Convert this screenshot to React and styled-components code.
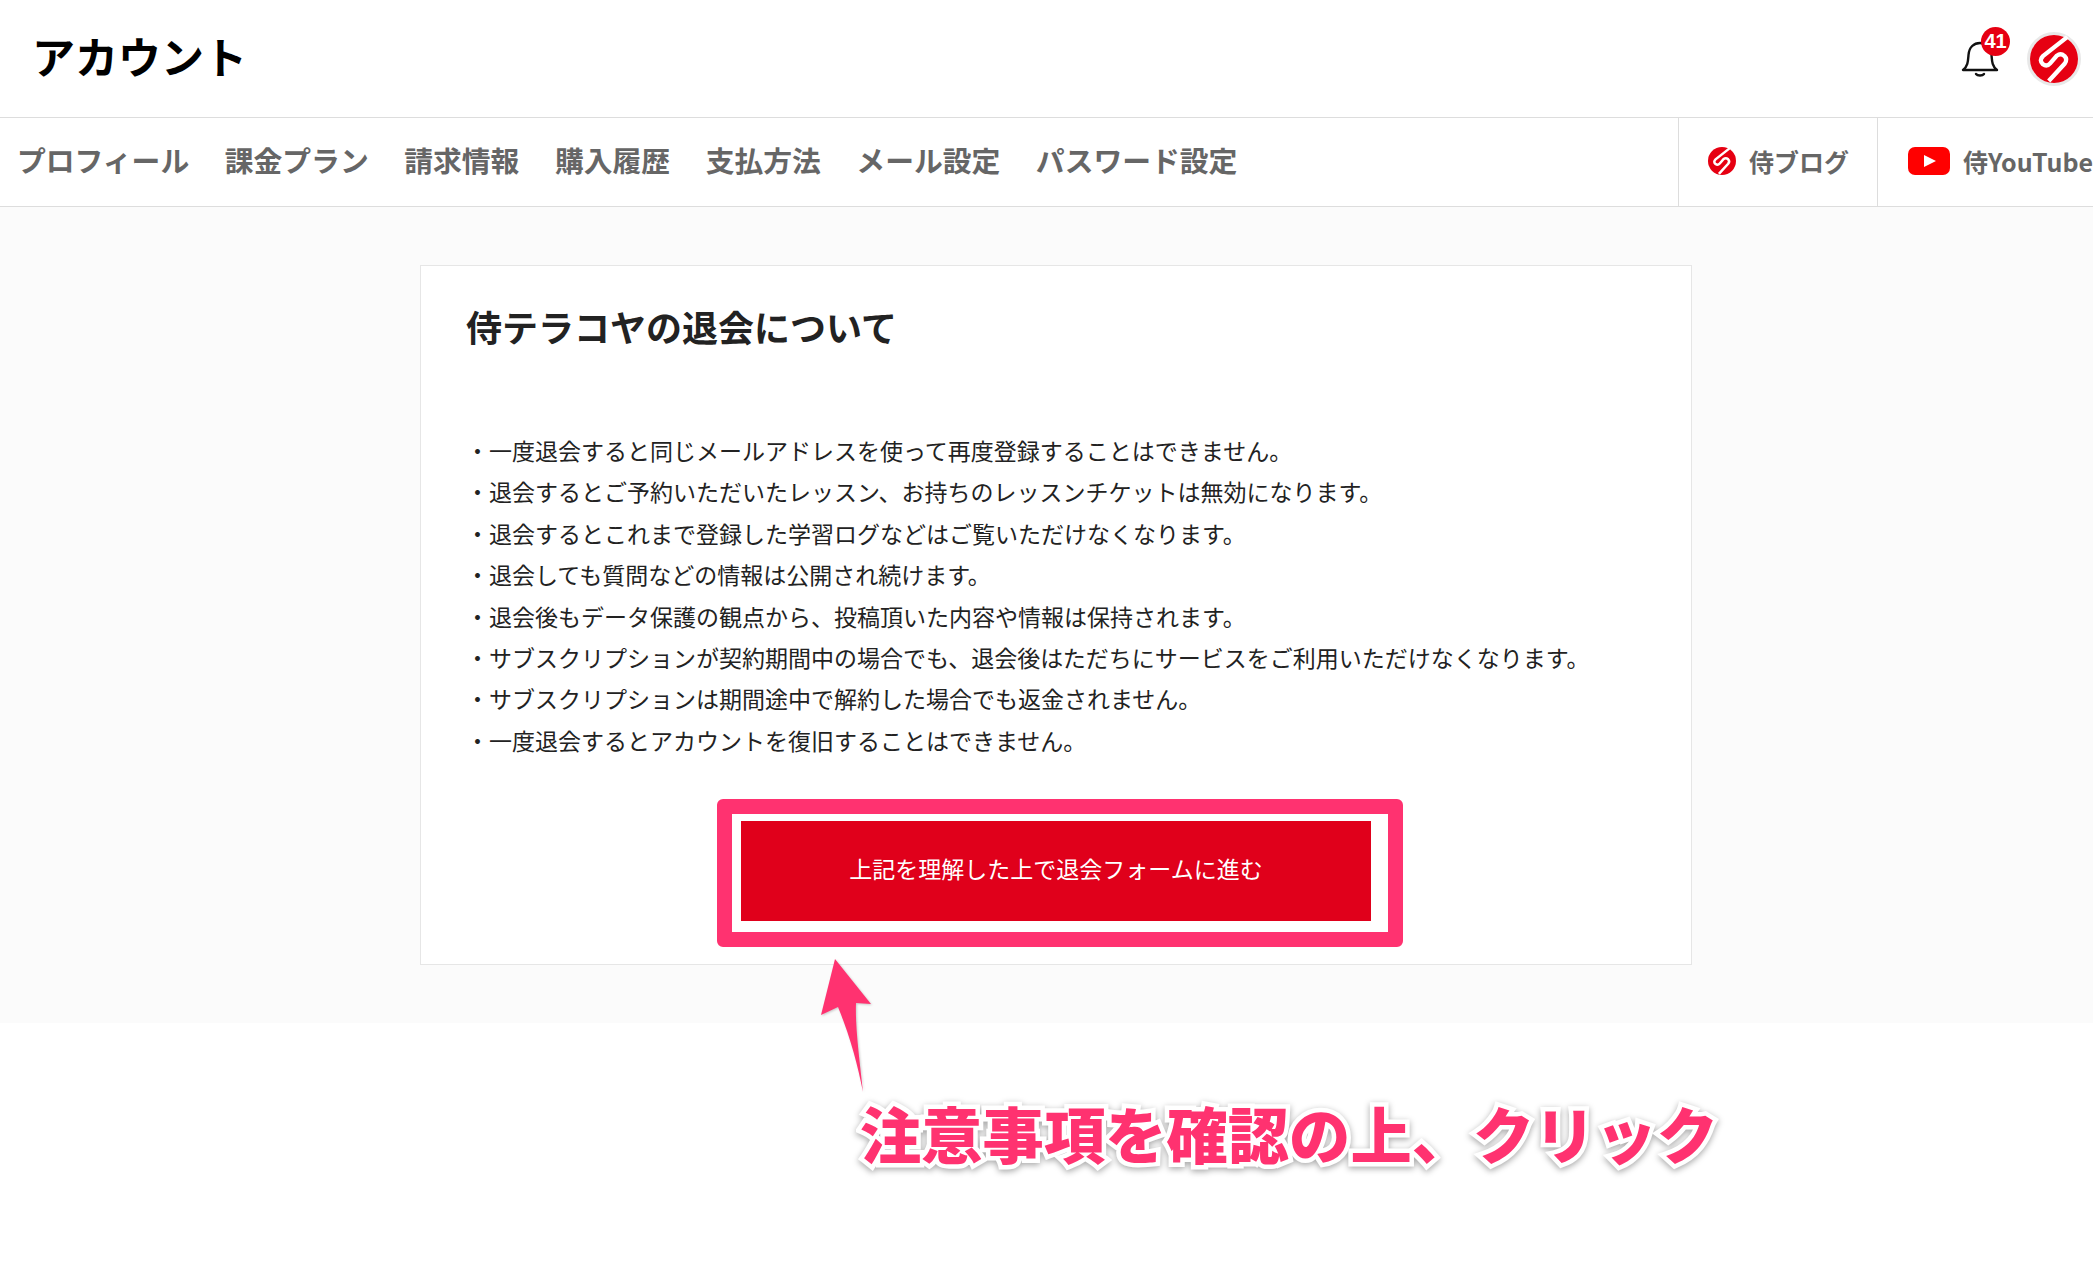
import styled, { createGlobalStyle } from 'styled-components';

const GlobalStyle = createGlobalStyle`
  html, body {
    margin: 0;
    background: #fff;
    font-family: "Noto Sans CJK JP", "Liberation Sans", sans-serif;
  }
`;

const NOTES = [
  '・一度退会すると同じメールアドレスを使って再度登録することはできません。',
  '・退会するとご予約いただいたレッスン、お持ちのレッスンチケットは無効になります。',
  '・退会するとこれまで登録した学習ログなどはご覧いただけなくなります。',
  '・退会しても質問などの情報は公開され続けます。',
  '・退会後もデータ保護の観点から、投稿頂いた内容や情報は保持されます。',
  '・サブスクリプションが契約期間中の場合でも、退会後はただちにサービスをご利用いただけなくなります。',
  '・サブスクリプションは期間途中で解約した場合でも返金されません。',
  '・一度退会するとアカウントを復旧することはできません。',
];

const TABS = ['プロフィール', '課金プラン', '請求情報', '購入履歴', '支払方法', 'メール設定', 'パスワード設定'];

const SamuraiMark = ({ size }) => (
  <svg width={size} height={size} viewBox="0 0 100 100">
    <circle cx="50" cy="50" r="50" fill="#e60012" />
    <path
      d="M78 4 L27 44 Q18 53 27 61 Q35 67 42 59 L56 43 Q64 37 72 44 Q79 51 72 60 L39 96"
      fill="none"
      stroke="#fff"
      strokeWidth="9"
    />
  </svg>
);

const App = () => {
  return (
    <Page>
      <GlobalStyle />
      <Header>
        <PageTitle>アカウント</PageTitle>
        <HeaderIcons>
          <BellWrap>
            <svg width="38" height="38" viewBox="0 0 38 38" fill="none" stroke="#111" strokeWidth="2.4">
              <path d="M2 31 H36 C31 27 31 22 30.500 16 C30 8 25 4 19 4 C13 4 8 8 7.500 16 C7 22 7 27 2 31 Z" strokeLinejoin="round" />
              <path d="M15 35 C16.500 37 21.500 37 23 35" strokeLinecap="round" />
            </svg>
            <Badge>41</Badge>
          </BellWrap>
          <Avatar>
            <SamuraiMark size={48} />
          </Avatar>
        </HeaderIcons>
      </Header>
      <NavBar>
        <Tabs>
          {TABS.map((t) => (
            <Tab key={t}>{t}</Tab>
          ))}
        </Tabs>
        <SideLinks>
          <SideLink $width={199} $pad={29}>
            <SamuraiMark size={28} />
            <SideText>侍ブログ</SideText>
          </SideLink>
          <SideLink $width={216} $pad={30}>
            <svg width="42" height="28" viewBox="0 0 42 28">
              <rect width="42" height="28" rx="7" fill="#f00" />
              <path d="M16 8 L28 14 L16 20 Z" fill="#fff" />
            </svg>
            <SideText>侍YouTube</SideText>
          </SideLink>
        </SideLinks>
      </NavBar>
      <Content>
        <Card>
          <CardTitle>侍テラコヤの退会について</CardTitle>
          <NoteList>
            {NOTES.map((n) => (
              <Note key={n}>{n}</Note>
            ))}
          </NoteList>
          <ButtonFrame>
            <WithdrawButton type="button">上記を理解した上で退会フォームに進む</WithdrawButton>
          </ButtonFrame>
        </Card>
      </Content>
      <Arrow width="60" height="140" viewBox="0 0 60 140">
        <path d="M15 1 L51 46 L36 45 C35 70 40 105 43 134 C38 108 30 78 18 49 L1 57 Z" fill="#ff3270" />
      </Arrow>
      <Callout>注意事項を確認の上、クリック</Callout>
    </Page>
  );
};

export default App;

const Page = styled.div`
  position: relative;
  width: 2093px;
  height: 1278px;
  overflow: hidden;
  background: #fff;
`;

const Header = styled.header`
  display: flex;
  align-items: center;
  justify-content: space-between;
  height: 118px;
  padding: 0 12px 6px 32px;
  box-sizing: border-box;
  border-bottom: 1px solid #ddd;
`;

const PageTitle = styled.h1`
  margin: 0;
  font-size: 43px;
  line-height: 1;
  font-weight: 700;
  color: #000;
`;

const HeaderIcons = styled.div`
  display: flex;
  align-items: center;
  gap: 28px;
  margin-top: 6px;
`;

const BellWrap = styled.div`
  position: relative;
  width: 38px;
  height: 38px;
  margin-top: -2px;
`;

const Badge = styled.span`
  position: absolute;
  left: 20px;
  top: -12px;
  width: 29px;
  height: 29px;
  border-radius: 50%;
  background: #e60012;
  color: #fff;
  font-family: "Liberation Sans", sans-serif;
  font-size: 20px;
  font-weight: 700;
  line-height: 29px;
  text-align: center;
`;

const Avatar = styled.div`
  display: flex;
  border: 3px solid #e8e8e8;
  border-radius: 50%;
`;

const NavBar = styled.nav`
  display: flex;
  align-items: stretch;
  justify-content: space-between;
  height: 89px;
  box-sizing: border-box;
  border-bottom: 1px solid #ddd;
`;

const Tabs = styled.div`
  display: flex;
  align-items: center;
  gap: 35.500px;
  padding: 0 0 6px 17px;
`;

const Tab = styled.a`
  font-size: 28.800px;
  font-weight: 700;
  color: #666;
  white-space: nowrap;
`;

const SideLinks = styled.div`
  display: flex;
`;

const SideLink = styled.a`
  display: flex;
  align-items: center;
  gap: 13px;
  width: ${(p) => p.$width}px;
  box-sizing: border-box;
  padding: 0 0 3px ${(p) => p.$pad}px;
  border-left: 1px solid #ddd;
  white-space: nowrap;
  overflow: hidden;

  svg {
    flex: none;
  }
`;

const SideText = styled.span`
  font-size: 25px;
  font-weight: 700;
  color: #666;
`;

const Content = styled.main`
  height: 816px;
  box-sizing: border-box;
  padding: 58px 0 0 420px;
  background: #fbfbfb;
`;

const Card = styled.section`
  width: 1272px;
  height: 700px;
  box-sizing: border-box;
  padding: 36px 0 0 45px;
  background: #fff;
  border: 1px solid #e6e6e6;
`;

const CardTitle = styled.h2`
  margin: 0 0 80px;
  font-size: 36px;
  line-height: 48px;
  font-weight: 700;
  color: #222;
`;

const NoteList = styled.ul`
  list-style: none;
  margin: 0 0 38px;
  padding: 0;
`;

const Note = styled.li`
  font-size: 23px;
  line-height: 41.400px;
  color: #222;
  white-space: nowrap;
`;

const ButtonFrame = styled.div`
  display: flex;
  width: 686px;
  height: 148px;
  margin-left: 251px;
  box-sizing: border-box;
  padding: 7px 17px 11px 9px;
  background: #fff;
  border: 15px solid #ff3270;
  border-radius: 6px;
`;

const WithdrawButton = styled.button`
  flex: 1;
  border: 0;
  background: #e0001b;
  color: #fff;
  font-family: inherit;
  font-size: 23px;
  padding: 0 0 6px 0;
`;

const Arrow = styled.svg`
  position: absolute;
  left: 820px;
  top: 958px;
  filter: drop-shadow(1px 1px 1px rgba(0, 0, 0, 0.2));
`;

const Callout = styled.div`
  position: absolute;
  left: 860px;
  top: 1089px;
  font-size: 61.300px;
  line-height: 88px;
  font-weight: 900;
  color: #ff3270;
  white-space: nowrap;
  -webkit-text-stroke: 9px #fff;
  paint-order: stroke fill;
  filter: drop-shadow(0 2px 3px rgba(0, 0, 0, 0.35));
`;
